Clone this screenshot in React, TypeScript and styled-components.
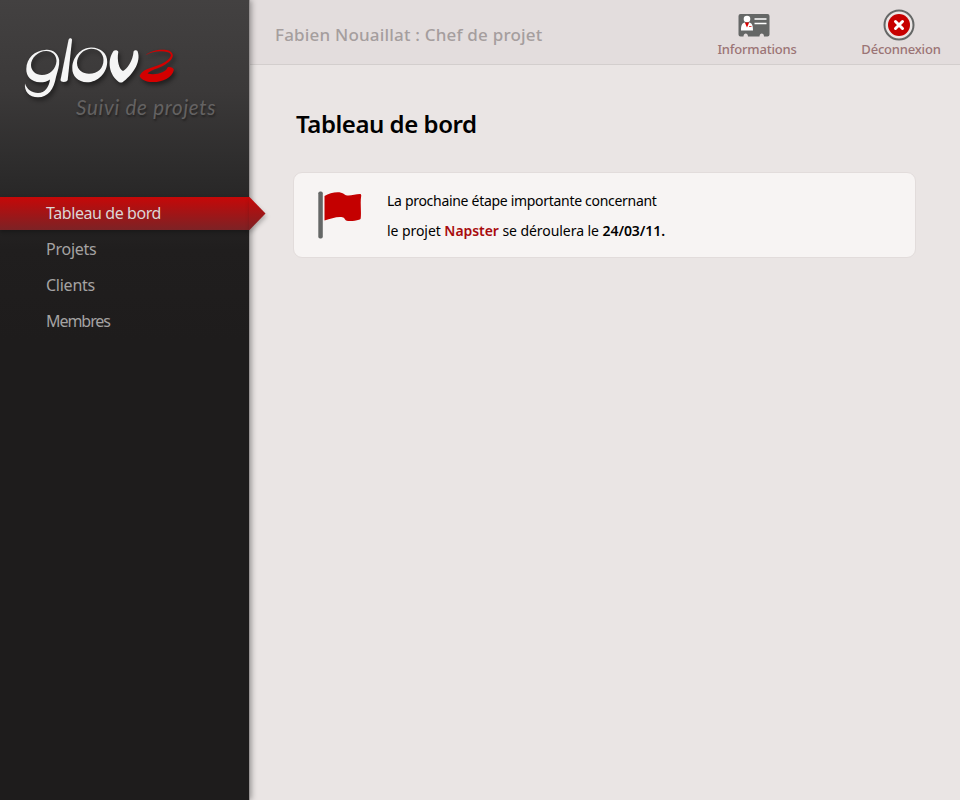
import React from "react";
import styled, { createGlobalStyle } from "styled-components";

const Global = createGlobalStyle`
  * { box-sizing: border-box; }
  body { margin: 0; background: #eae5e4; font-family: "Trebuchet MS", "Noto Sans", sans-serif; }
`;

const Page = styled.div`
  display: flex;
  height: 800px;
  overflow: hidden;
  background: #eae5e4;
`;

const Sidebar = styled.aside`
  position: relative;
  z-index: 1;
  flex: 0 0 249px;
  background: linear-gradient(#434141 0, #3b3939 90px, #2b2a2a 180px, #201e1e 250px, #1e1c1c 340px);
  box-shadow: 1px 0 0 #999595, 2px 0 6px rgba(0, 0, 0, 0.4);
`;

const Brand = styled.div`
  height: 197px;
  padding-top: 30px;
`;

const Logo = styled.svg`
  display: block;
  filter: drop-shadow(2px 3px 2px rgba(0, 0, 0, 0.45));
`;

const Tagline = styled.div`
  margin: -8px 0 0 76px;
  color: #646262;
  font: italic 20.5px/26px Lato, sans-serif;
  letter-spacing: 0.73px;
  white-space: nowrap;
  text-shadow: 1px 2px 2px rgba(0, 0, 0, 0.35);
`;

const Nav = styled.nav`
  display: flex;
  flex-direction: column;
  gap: 3px;
`;

const NavItem = styled.a<{ $active?: boolean; $spacing: number }>`
  display: block;
  position: relative;
  height: 33px;
  padding-left: 46px;
  line-height: 33px;
  font-size: 16px;
  letter-spacing: ${(p) => p.$spacing}px;
  color: ${(p) => (p.$active ? "#dcd5d5" : "#a5a3a3")};
  background: ${(p) => (p.$active ? "linear-gradient(#c60808, #7c2225)" : "none")};
  box-shadow: ${(p) => (p.$active ? "0 2px 4px rgba(0, 0, 0, 0.3)" : "none")};
`;

const Pointer = styled.svg`
  position: absolute;
  left: 249px;
  top: 0;
  overflow: visible;
  filter: drop-shadow(1px 3px 2px rgba(0, 0, 0, 0.25));
`;

const Main = styled.main`
  flex: 1;
`;

const Header = styled.header`
  display: flex;
  height: 65px;
  padding-left: 26px;
  background: #e3dddd;
  border-bottom: 1px solid #d3cecd;
`;

const User = styled.div`
  flex: 1;
  padding-top: 22px;
  line-height: 25px;
  font-size: 17px;
  font-weight: 500;
  letter-spacing: 0.19px;
  color: #a59e9e;
`;

const Action = styled.a<{ $width: number; $right: number; $spacing: number }>`
  display: flex;
  flex-direction: column;
  align-items: center;
  width: ${(p) => p.$width}px;
  margin-right: ${(p) => p.$right}px;
  padding-top: 9px;
  color: #9b7475;
  font-size: 13px;
  font-weight: 500;
  letter-spacing: ${(p) => p.$spacing}px;
  line-height: 16px;
  white-space: nowrap;
`;

const ActionIcon = styled.svg<{ $shift: number }>`
  display: block;
  flex: none;
  margin-right: ${(p) => p.$shift}px;
`;

const Title = styled.h1`
  margin: 42px 0 0 47px;
  font-size: 24px;
  line-height: 34px;
  font-weight: 600;
  letter-spacing: -0.45px;
  color: #000;
`;

const Notice = styled.section`
  display: flex;
  width: 623px;
  height: 86px;
  margin: 31px 0 0 44px;
  padding: 13px 0 0 24px;
  background: #f7f4f3;
  border: 1px solid #e2dcdb;
  border-radius: 9px;
`;

const Flag = styled.svg`
  flex: none;
  margin-top: 5px;
`;

const Message = styled.p`
  margin: 0 0 0 21px;
  font-size: 14px;
  line-height: 30px;
  color: #000;
  white-space: nowrap;
`;

const Line = styled.span<{ $spacing: number }>`
  display: block;
  letter-spacing: ${(p) => p.$spacing}px;
`;

const Strong = styled.strong<{ $red?: boolean }>`
  font-weight: 600;
  color: ${(p) => (p.$red ? "#a80b0e" : "#000")};
`;

export default function App() {
  return (
    <>
      <Global />
      <Page>
        <Sidebar>
          <Brand>
            <Logo width="249" height="72" viewBox="0 30 249 72">
              <g fill="#f5f5f5">
                <path fillRule="evenodd" d="M45 50C52 49 58 53 59.200 60C59.700 66 57.500 71 56 77C54 89 48 97.300 38 97.300C29 97.300 24 91 25 83.500C27 89.500 32 93 38 93C45 93 49 87 50 79.500C47.500 81.500 44 82.300 40 82.300C31 82 26 76 26.300 69C26.500 58 35 50.500 45 50ZM46 50.900C38 51 31 58 31 65C31 71 36 75 42 75C50 75 56 69 56.500 61C56.600 55 52 50.700 46 50.900Z" />
                <path d="M68.500 40C69 37.800 72 37.800 72 40L67.700 80C67 82.600 60.500 82.600 60.500 80Z" />
                <path fillRule="evenodd" d="M91 47.600C101 47.500 107.500 54 107.200 62C107 73 98 82.300 87 82.300C78 82 72 76 72.300 68C72.500 57 81 47.800 91 47.600ZM91 48.700C83 49 77 56 77 63C77 70 83 73.800 89 73.800C98 73.800 103.500 68 103.500 60C103.500 53 98 48.500 91 48.700Z" />
                <path d="M113.500 51C114.500 49.500 118.300 50 118.300 52C116.800 60 119 69.500 123 71C127 69.500 133 60 133.500 52C133.500 50 136.700 49.500 137.500 51C142 63 131 76 122.500 82.300C121 82.900 120 82.600 118.500 81.700C109.500 75 106.500 61 113.500 51Z" />
              </g>
              <path fill="#d40000" d="M145.500 55.300C151 50 164 48.300 170 51.200C176.500 55.500 170.500 61.500 164 65.200C158 68.500 150.500 70 147.500 73.500C156 75.500 166 72.500 167.500 67.500C169.500 66.300 174 68 173.800 70C172 79 160 83 150 81.900C145 81.200 139.500 78.500 139.700 75.500C144 67 157 67.500 165 62C171 58 173 54 168 52.300C161 50 152 51.500 145.500 55.300Z" />
            </Logo>
            <Tagline>Suivi de projets</Tagline>
          </Brand>
          <Nav>
            <NavItem $active $spacing={-0.42}>
              Tableau de bord
              <Pointer width="17" height="33">
                <defs>
                  <linearGradient id="pointer" x2="0" y2="1">
                    <stop stopColor="#c60808" />
                    <stop offset="1" stopColor="#7c2225" />
                  </linearGradient>
                </defs>
                <path fill="url(#pointer)" d="M0 0H.5L16.500 16.500L.5 33H0Z" />
              </Pointer>
            </NavItem>
            <NavItem $spacing={-0.25}>Projets</NavItem>
            <NavItem $spacing={-0.25}>Clients</NavItem>
            <NavItem $spacing={-1.05}>Membres</NavItem>
          </Nav>
        </Sidebar>
        <Main>
          <Header>
            <User>Fabien Nouaillat : Chef de projet</User>
            <Action $width={80} $right={64} $spacing={-0.2}>
              <ActionIcon $shift={6} width="32" height="32" viewBox="0 0 32 32">
                <path fill="#656766" d="M2.500 5H29.500Q31.500 5 31.500 7V25.500Q31.500 27.500 29.500 27.500H26C26 23.500 21.500 23.500 21.500 27.500H10C10 23.500 5.500 23.500 5.500 27.500H2.500Q.5 27.500 .5 25.500V7Q.5 5 2.500 5Z" />
                <circle cx="9" cy="10" r="3.300" fill="#fff" />
                <path fill="#fff" d="M3 21.500C3 16 4 14 7 13.500L9 16L11 13.500C14 14 15 16 15 21.500Z" />
                <path fill="#d00" d="M7 13.500H11L10.300 15.500L9 18.500L7.700 15.500ZM11 17.200H13.500V18H11Z" />
                <path stroke="#fff" strokeWidth="1.700" d="M16.500 10H28.500M16.500 14.500H28.500" />
              </ActionIcon>
              Informations
            </Action>
            <Action $width={80} $right={19} $spacing={-0.2}>
              <ActionIcon $shift={4} width="32" height="32" viewBox="0 0 32 32">
                <circle cx="16" cy="16" r="14.500" fill="#ebe6e5" stroke="#656766" strokeWidth="2" />
                <circle cx="16" cy="16" r="11" fill="#c70000" />
                <path stroke="#fff" strokeWidth="3" strokeLinecap="round" d="M12.500 12.500L19.500 19.500M19.500 12.500L12.500 19.500" />
              </ActionIcon>
              Déconnexion
            </Action>
          </Header>
          <Title>Tableau de bord</Title>
          <Notice>
            <Flag width="48" height="50" viewBox="0 0 48 50">
              <rect x=".3" y=".5" width="4.500" height="47" rx="1.800" fill="#656766" />
              <path fill="#c40000" d="M6.500 5C12 2 21 -.5 26 3C29 6 36 3.500 42 3Q43.500 3 43.200 5C42 12 43.500 20 42.700 27.500Q42.600 28.500 41 28.800C37 30 31 30.500 28 29.500C26 27 26 26 22 26C17 26 12 28 6.500 29.500Z" />
            </Flag>
            <Message>
              <Line $spacing={-0.3}>La prochaine étape importante concernant</Line>
              <Line $spacing={-0.06}>
                le projet <Strong $red>Napster</Strong> se déroulera le <Strong>24/03/11.</Strong>
              </Line>
            </Message>
          </Notice>
        </Main>
      </Page>
    </>
  );
}
